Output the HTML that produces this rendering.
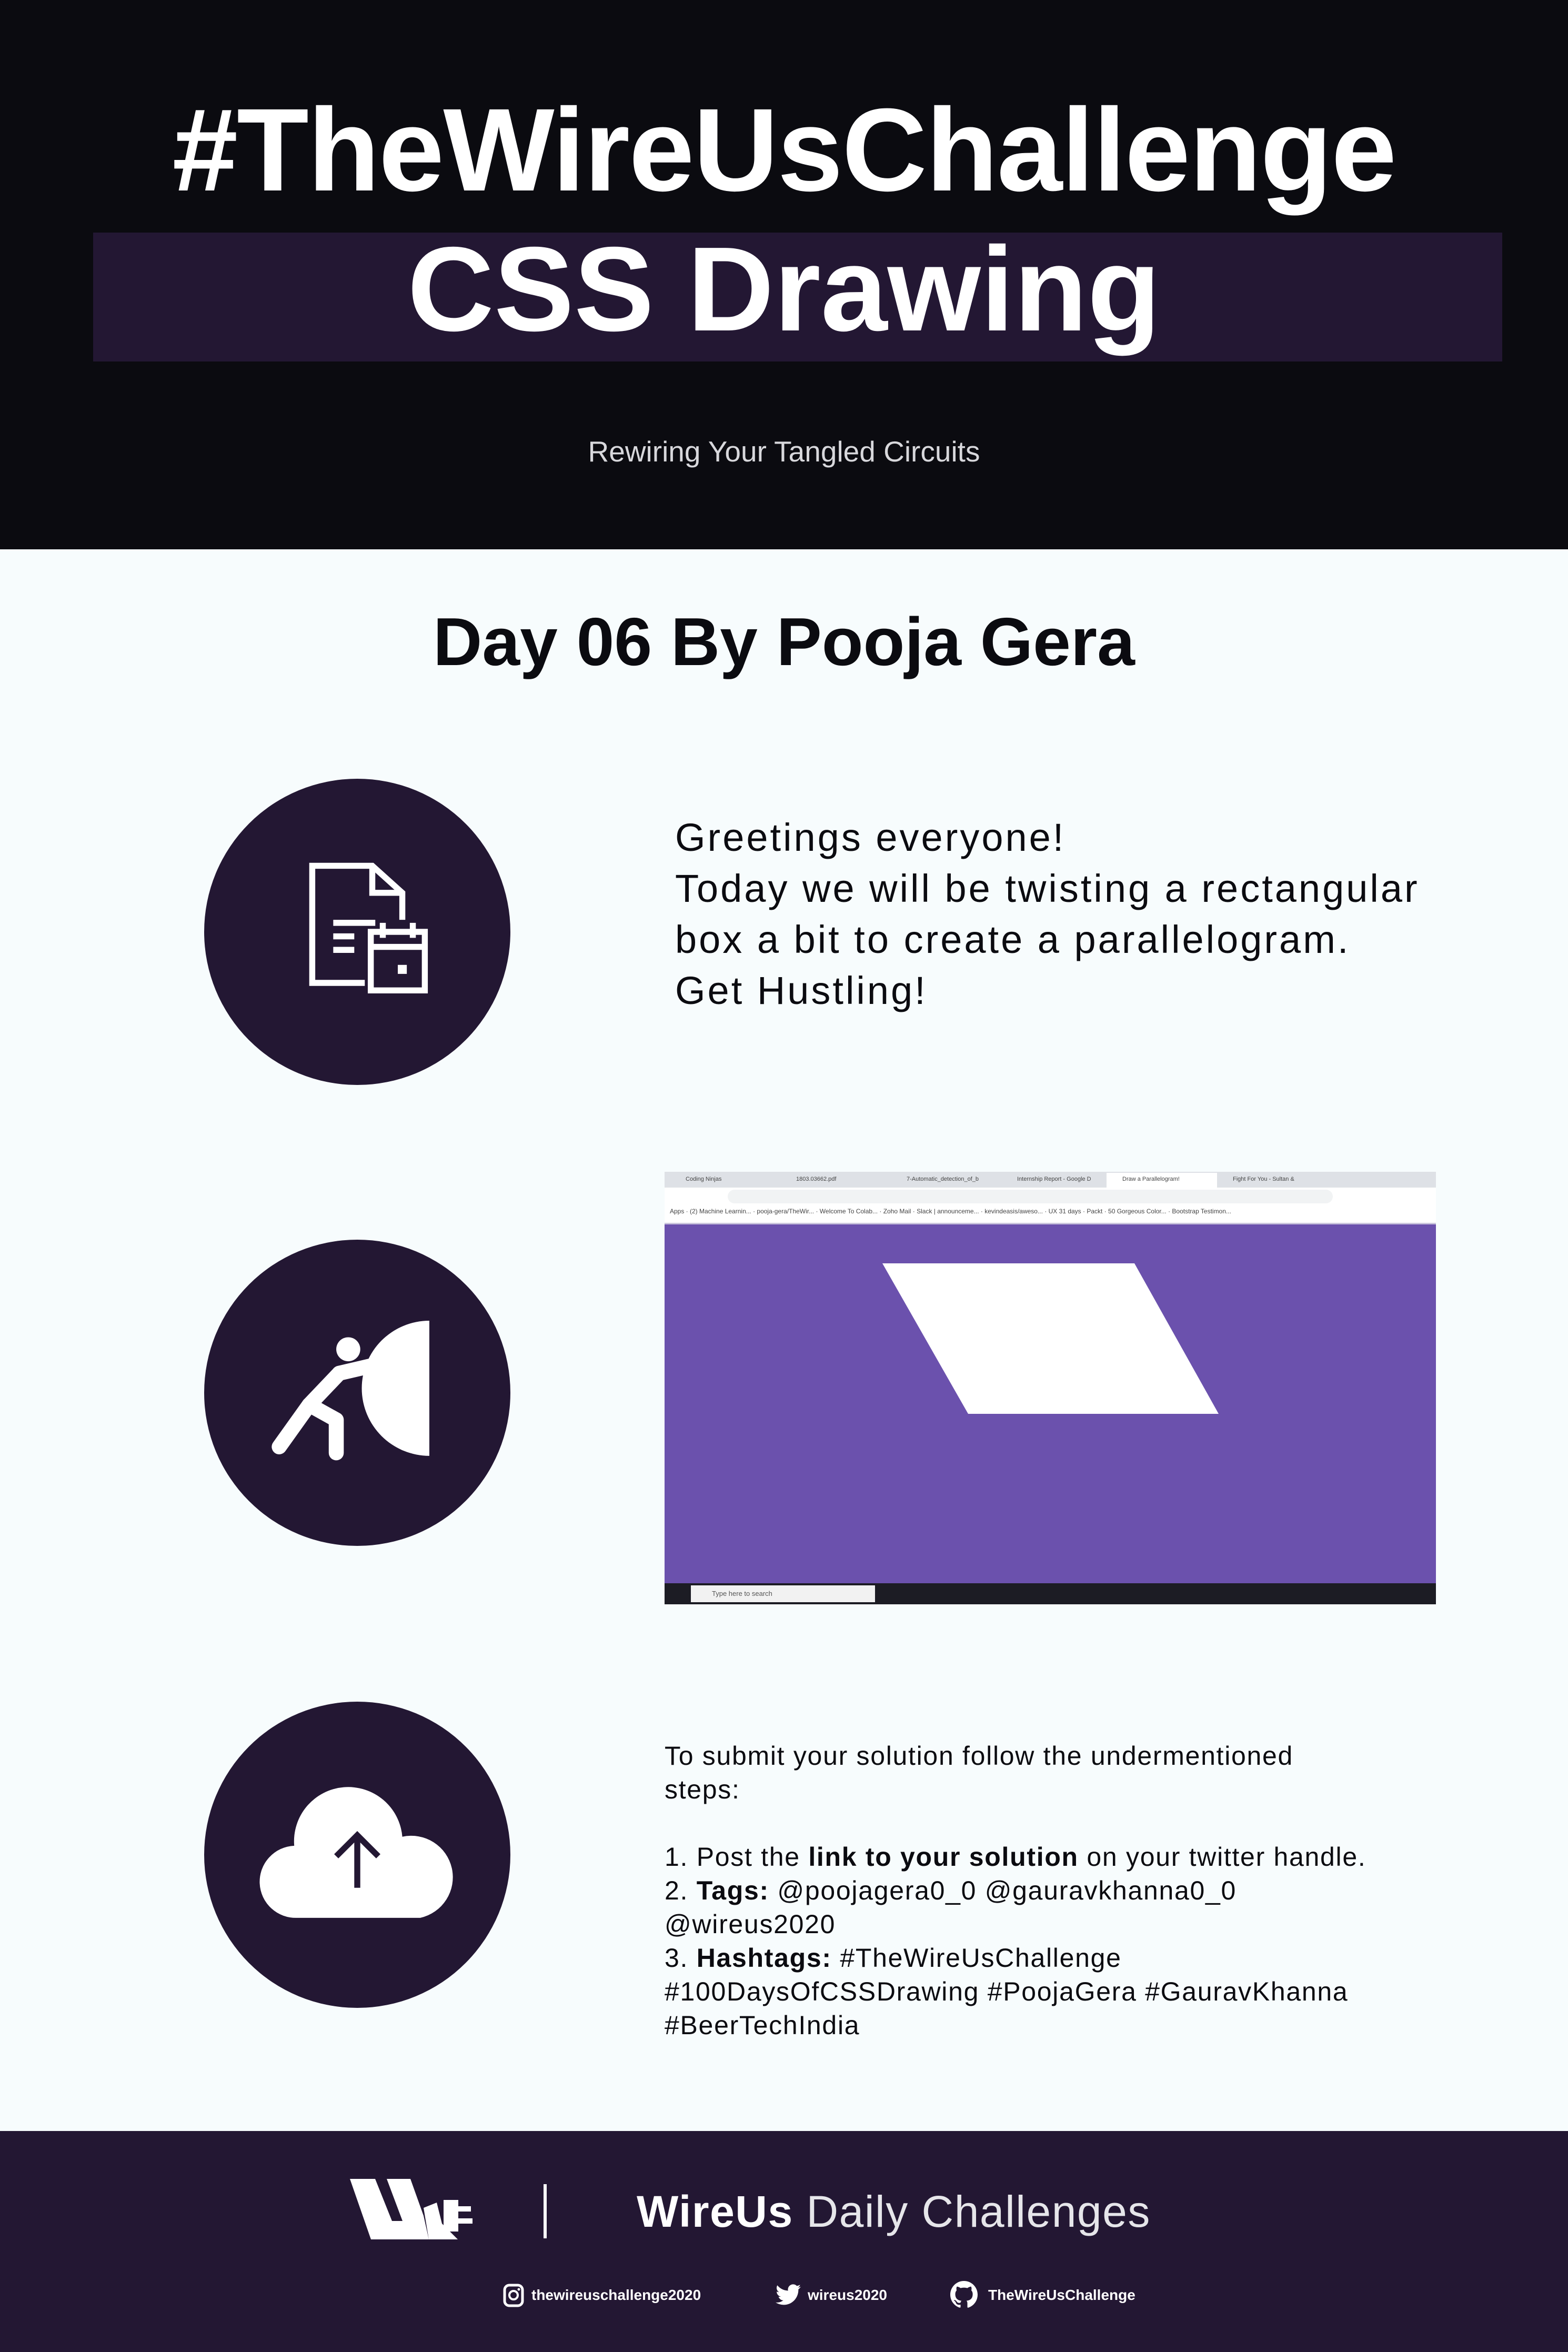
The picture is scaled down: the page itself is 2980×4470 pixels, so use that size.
<!DOCTYPE html>
<html><head><meta charset="utf-8"><style>
*{margin:0;padding:0;box-sizing:border-box}
body{width:2980px;height:4470px;position:relative;background:#f7fcfd;font-family:"Liberation Sans",sans-serif;overflow:hidden}
.a{position:absolute;white-space:nowrap}
.c{text-align:center;left:0;width:2980px}
</style></head><body>
<div class="a" style="left:0;top:0;width:2980px;height:1044px;background:#0b0b10"></div>
<div class="a" style="left:177px;top:442px;width:2678px;height:245px;background:#231733"></div>
<div class="a c" style="top:155px;font-size:224px;line-height:260px;font-weight:bold;color:#fff;letter-spacing:-2px">#TheWireUsChallenge</div>
<div class="a c" style="top:425px;font-size:228px;line-height:250px;font-weight:bold;color:#fff">CSS Drawing</div>
<div class="a c" style="top:824px;font-size:55px;line-height:68px;color:#d8d8dc">Rewiring Your Tangled Circuits</div>
<div class="a c" style="top:1140px;font-size:129px;line-height:160px;font-weight:bold;color:#0b0b10">Day 06 By Pooja Gera</div>

<svg class="a" style="left:388px;top:1480px" width="582" height="582" viewBox="-102 -102 204 204">
<circle r="102" fill="#231733"/>
<g fill="none" stroke="#fff" stroke-width="4">
<path d="M5,34 H-30 V-44 H10 L30,-26 V-8"/><path d="M10,-44 V-26 H30"/>
<path d="M-16,-6 H12 M-16,3 H-2 M-16,12 H-2"/>
<rect x="9" y="0" width="36" height="39"/><path d="M9,10 H45 M17,-6 V4 M37,-6 V4"/>
</g><rect x="27" y="22" width="6" height="6" fill="#fff"/>
</svg>
<svg class="a" style="left:388px;top:2356px" width="582" height="582" viewBox="-102 -102 204 204">
<circle r="102" fill="#231733"/>
<path d="M48,-48 V42 A45 45 0 0 1 48,-48 Z" fill="#fff"/>
<circle cx="-6" cy="-29" r="8" fill="#fff"/>
<g fill="none" stroke="#fff" stroke-width="10" stroke-linecap="round" stroke-linejoin="round">
<path d="M-12,-13 L18,-20"/><path d="M-12,-13 L-32,8 L-52,36"/><path d="M-32,8 L-14,18 V40"/>
</g></svg>
<svg class="a" style="left:388px;top:3234px" width="582" height="582" viewBox="-102 -102 204 204">
<circle r="102" fill="#231733"/>
<path d="M-40,42 A24,24 0 0 1 -42,-6 A36,36 0 0 1 30,-12 A26,26 0 0 1 42,42 Z" fill="#fff"/>
<path d="M0,22 V-12 M-14,1 L0,-13 L14,1" fill="none" stroke="#231733" stroke-width="4"/>
</svg>

<div class="a" style="left:1283px;top:1543px;font-size:74px;line-height:97px;color:#0b0b10;letter-spacing:4px">Greetings everyone!<br>Today we will be twisting a rectangular<br>box a bit to create a parallelogram.<br>Get Hustling!</div>

<div class="a" style="left:1263px;top:2227px;width:1466px;height:822px;background:#6b51ad;overflow:hidden">
<div class="a" style="left:0;top:0;width:1466px;height:30px;background:#dee1e6;font-size:11px;color:#444"><span class="a" style="left:40px;top:8px">Coding Ninjas</span><span class="a" style="left:250px;top:8px">1803.03662.pdf</span><span class="a" style="left:460px;top:8px">7-Automatic_detection_of_b</span><span class="a" style="left:670px;top:8px">Internship Report - Google D</span><span class="a" style="left:1080px;top:8px">Fight For You - Sultan &amp;</span></div>
<div class="a" style="left:840px;top:2px;width:210px;height:28px;background:#fff;font-size:11px;color:#444;padding:6px 0 0 30px">Draw a Parallelogram!</div>
<div class="a" style="left:0;top:30px;width:1466px;height:68px;background:#fff;font-size:12px;color:#444"><span class="a" style="left:140px;top:8px">localhost:5500/CSS%20Drawing/6_CSSD/</span><span class="a" style="left:10px;top:38px">Apps · (2) Machine Learnin... · pooja-gera/TheWir... · Welcome To Colab... · Zoho Mail · Slack | announceme... · kevindeasis/aweso... · UX 31 days · Packt · 50 Gorgeous Color... · Bootstrap Testimon...</span></div>
<div class="a" style="left:120px;top:34px;width:1150px;height:26px;background:#f1f3f4;border-radius:13px"></div>
<div class="a" style="left:0;top:97px;width:1466px;height:3px;background:#c9c4dc"></div>
<svg class="a" style="left:0;top:0" width="1466" height="822"><polygon points="414,174 893,174 1053,460 577,460" fill="#fff"/></svg>
<div class="a" style="left:0;top:782px;width:1466px;height:40px;background:#1c1c24"></div>
<div class="a" style="left:50px;top:786px;width:350px;height:32px;background:#f2f2f2;font-size:13px;color:#555;padding:8px 0 0 40px">Type here to search</div>
</div>

<div class="a" style="left:1263px;top:3305px;font-size:50px;line-height:64px;color:#0b0b10;letter-spacing:1.7px">To submit your solution follow the undermentioned<br>steps:<br><br>1. Post the <b>link to your solution</b> on your twitter handle.<br>2. <b>Tags:</b> @poojagera0_0 @gauravkhanna0_0<br>@wireus2020<br>3. <b>Hashtags:</b> #TheWireUsChallenge<br>#100DaysOfCSSDrawing #PoojaGera #GauravKhanna<br>#BeerTechIndia</div>

<div class="a" style="left:0;top:4050px;width:2980px;height:420px;background:#231733"></div>
<svg class="a" style="left:665px;top:4141px" width="265" height="115" viewBox="0 0 265 115">
<polygon points="0,0 48,0 80,80 100,80 70,0 115,0 140,70 150,115 40,115" fill="#fff"/>
<polygon points="140,55 165,45 175,85 205,115 150,115" fill="#fff"/>
<rect x="200" y="52" width="30" height="10" fill="#fff"/><rect x="205" y="75" width="28" height="10" fill="#fff"/><rect x="178" y="40" width="28" height="60" fill="#fff"/>
</svg>
<div class="a" style="left:1033px;top:4151px;width:6px;height:103px;background:#fff"></div>
<div class="a" style="left:1210px;top:4148px;font-size:84px;line-height:110px;color:#e6e6ea;letter-spacing:1.5px"><b style="color:#fff">WireUs</b> Daily Challenges</div>
<svg class="a" style="left:956px;top:4340px" width="40" height="45" viewBox="0 0 40 45"><rect x="3" y="3" width="34" height="39" rx="9" fill="none" stroke="#fff" stroke-width="5"/><circle cx="20" cy="22" r="8" fill="none" stroke="#fff" stroke-width="4"/><circle cx="30" cy="11" r="2.5" fill="#fff"/></svg>
<div class="a" style="left:1010px;top:4343px;font-size:28px;line-height:38px;font-weight:bold;color:#fff">thewireuschallenge2020</div>
<svg class="a" style="left:1474px;top:4340px" width="50" height="44" viewBox="0 0 24 20"><path d="M23 2.3a9 9 0 0 1-2.7.8A4.7 4.7 0 0 0 22.4.5a9.5 9.5 0 0 1-3 1.1A4.7 4.7 0 0 0 11.4 5.9 13.4 13.4 0 0 1 1.6 1a4.7 4.7 0 0 0 1.5 6.3 4.7 4.7 0 0 1-2.1-.6 4.7 4.7 0 0 0 3.8 4.6 4.7 4.7 0 0 1-2.1.1 4.7 4.7 0 0 0 4.4 3.3A9.5 9.5 0 0 1 0 16.6 13.4 13.4 0 0 0 7.3 18.8c8.7 0 13.5-7.2 13.5-13.5v-.6A9.6 9.6 0 0 0 23 2.3z" fill="#fff"/></svg>
<div class="a" style="left:1535px;top:4343px;font-size:28px;line-height:38px;font-weight:bold;color:#fff">wireus2020</div>
<svg class="a" style="left:1806px;top:4335px" width="52" height="52" viewBox="0 0 16 16"><path fill="#fff" d="M8 0C3.580 0 0 3.58 0 8c0 3.54 2.290 6.53 5.470 7.59.4.07.55-.17.55-.38v-1.34c-2.230.48-2.700-1.070-2.700-1.070-.36-.92-.89-1.170-.89-1.170-.73-.5.06-.49.06-.49.8.06 1.230.83 1.230.83.71 1.220 1.870.87 2.330.66.07-.52.28-.87.51-1.070-1.780-.2-3.640-.89-3.640-3.950 0-.87.31-1.590.82-2.150-.08-.2-.36-1.020.08-2.120 0 0 .67-.21 2.200.82a7.600 7.600 0 0 1 4 0c1.530-1.040 2.200-.82 2.200-.82.44 1.100.16 1.920.08 2.120.51.56.82 1.270.82 2.150 0 3.070-1.870 3.750-3.650 3.950.29.25.54.73.54 1.480v2.200c0 .21.15.46.55.38A8.010 8.010 0 0 0 16 8c0-4.420-3.580-8-8-8z"/></svg>
<div class="a" style="left:1878px;top:4343px;font-size:28px;line-height:38px;font-weight:bold;color:#fff">TheWireUsChallenge</div>
</body></html>
